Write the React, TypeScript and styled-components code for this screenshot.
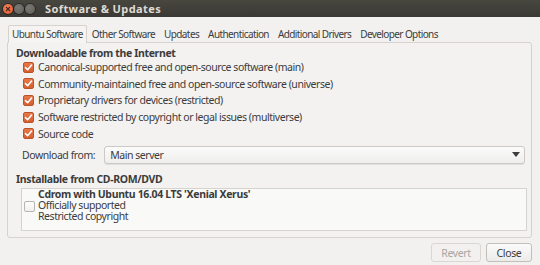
import styled, { createGlobalStyle } from "styled-components";

const GlobalStyle = createGlobalStyle`
   html, body {
      margin: 0;
      padding: 0;
      background: #f2f1f0;
   }
   body {
      font-family: "Noto Sans", "DejaVu Sans", sans-serif;
      font-size: 10.5px;
      letter-spacing: -0.45px;
      color: #3c3c3c;
      white-space: nowrap;
   }
`;

const sources = [
   { label: "Canonical-supported free and open-source software (main)", checked: true },
   { label: "Community-maintained free and open-source software (universe)", checked: true },
   { label: "Proprietary drivers for devices (restricted)", checked: true },
   { label: "Software restricted by copyright or legal issues (multiverse)", checked: true },
   { label: "Source code", checked: true },
];

const tabs = ["Ubuntu Software", "Other Software", "Updates", "Authentication", "Additional Drivers", "Developer Options"];

function CheckBox(props: { checked: boolean }) {
   return (
      <Box $checked={props.checked}>
         {props.checked && (
            <svg width="9" height="9" viewBox="0 0 9 9">
               <path d="M1.5 4.6 L3.6 6.7 L7.6 2" stroke="#fff" strokeWidth="1.6" fill="none" strokeLinecap="round" strokeLinejoin="round" />
            </svg>
         )}
      </Box>
   );
}

export default function App() {
   return (
      <Window>
         <GlobalStyle />
         <TitleBar>
            <WinButtons>
               <WinButton $kind="close">
                  <svg width="6" height="6" viewBox="0 0 6 6">
                     <path d="M1 1 L5 5 M5 1 L1 5" stroke="#4a2a1c" strokeWidth="1.2" />
                  </svg>
               </WinButton>
               <WinButton $kind="min" />
               <WinButton $kind="max" />
            </WinButtons>
            <Title>Software &amp; Updates</Title>
         </TitleBar>

         <Body>
            <TabBar>
               {tabs.map((t, i) => (
                  <Tab key={t} $active={i === 0}>{t}</Tab>
               ))}
            </TabBar>
            <Page>
               <SectionTitle>Downloadable from the Internet</SectionTitle>
               <CheckList>
                  {sources.map(s => (
                     <CheckRow key={s.label}>
                        <CheckBox checked={s.checked} />
                        <span>{s.label}</span>
                     </CheckRow>
                  ))}
               </CheckList>
               <DownloadRow>
                  <span>Download from:</span>
                  <Combo>
                     <span>Main server</span>
                     <svg width="8" height="5" viewBox="0 0 8 5">
                        <path d="M0 0 L8 0 L4 5 Z" fill="#3c3c3c" />
                     </svg>
                  </Combo>
               </DownloadRow>
               <SectionTitle>Installable from CD-ROM/DVD</SectionTitle>
               <ListBox>
                  <CdItem>
                     <CdCheck><CheckBox checked={false} /></CdCheck>
                     <CdText>
                        <strong>Cdrom with Ubuntu 16.04 LTS 'Xenial Xerus'</strong>
                        <span>Officially supported</span>
                        <span>Restricted copyright</span>
                     </CdText>
                  </CdItem>
               </ListBox>
            </Page>
            <ButtonRow>
               <Button disabled>Revert</Button>
               <Button>Close</Button>
            </ButtonRow>
         </Body>
      </Window>
   );
}

const Window = styled.div`
   width: 540px;
   height: 265px;
   display: flex;
   flex-direction: column;
   overflow: hidden;
`;

const TitleBar = styled.div`
   height: 17px;
   background: linear-gradient(#47463f, #3a3935);
   display: flex;
   align-items: center;
   padding-left: 3px;
   gap: 10px;
`;

const WinButtons = styled.div`
   display: flex;
   gap: 1px;
`;

const WinButton = styled.div<{ $kind: string }>`
   width: 10px;
   height: 10px;
   border-radius: 50%;
   display: flex;
   align-items: center;
   justify-content: center;
   background: ${p => (p.$kind === "close" ? "radial-gradient(circle at 40% 35%, #f7845c, #e0512a)" : "radial-gradient(circle at 40% 35%, #7a7872, #5d5b56)")};
   box-shadow: 0 0 0 1px rgba(0, 0, 0, 0.35);
`;

const Title = styled.div`
   color: #dfdbd2;
   font-size: 11px;
   font-weight: bold;
   letter-spacing: 0.4px;
`;

const Body = styled.div`
   flex: 1;
   display: flex;
   flex-direction: column;
   padding: 7px 8px 0 7px;
`;

const TabBar = styled.div`
   display: flex;
   align-items: flex-end;
   gap: 1px;
   padding-left: 1px;
   height: 18px;
`;

const Tab = styled.div<{ $active?: boolean }>`
   padding: 0 3px 0 3px;
   height: 17px;
   line-height: 16px;
   font-size: 10px;
   letter-spacing: -0.6px;
   color: #3c3c3c;
   border: 1px solid ${p => (p.$active ? "#d6d2ce" : "transparent")};
   border-bottom: none;
   border-radius: 2px 2px 0 0;
   background: ${p => (p.$active ? "#f5f4f3" : "transparent")};
   margin-bottom: -1px;
   position: relative;
   z-index: 1;
`;

const Page = styled.div`
   height: 196px;
   box-sizing: border-box;
   border: 1px solid #d6d2ce;
   border-radius: 0 3px 3px 3px;
   background: #f3f2f1;
   padding: 2px 6px 0 8px;
   display: flex;
   flex-direction: column;
`;

const SectionTitle = styled.div`
   font-weight: bold;
   height: 16px;
   line-height: 16px;
   letter-spacing: -0.35px;
`;

const CheckList = styled.div`
   display: flex;
   flex-direction: column;
   padding-left: 7px;
   margin-top: -2px;
`;

const CheckRow = styled.div`
   display: flex;
   align-items: center;
   gap: 4px;
   height: 16.6px;
`;

const Box = styled.div<{ $checked: boolean }>`
   width: 11px;
   height: 11px;
   box-sizing: border-box;
   border-radius: 2px;
   display: flex;
   align-items: center;
   justify-content: center;
   border: 1px solid ${p => (p.$checked ? "#b9532a" : "#b8b4b0")};
   background: ${p => (p.$checked ? "linear-gradient(#e8774a, #d55e2e)" : "linear-gradient(#fdfdfd, #f1f0ef)")};
   flex: none;
`;

const DownloadRow = styled.div`
   display: flex;
   align-items: center;
   gap: 9px;
   padding-left: 6px;
   margin-top: 3px;
   height: 20px;
   margin-bottom: 6px;
`;

const Combo = styled.div`
   flex: 1;
   height: 18px;
   box-sizing: border-box;
   border: 1px solid #ccc8c4;
   border-radius: 3px;
   background: linear-gradient(#fbfbfb, #efeeed);
   box-shadow: 0 1px 0 rgba(0, 0, 0, 0.08);
   display: flex;
   align-items: center;
   justify-content: space-between;
   padding: 0 4px 0 5px;
`;

const ListBox = styled.div`
   margin: 1px 0 0 5px;
   height: 43px;
   width: 506px;
   box-sizing: border-box;
   border: 1px solid #d6d2ce;
   background: #f9f9f8;
`;

const CdItem = styled.div`
   display: flex;
   padding: 0 0 0 2px;
`;

const CdCheck = styled.div`
   padding-top: 12px;
   width: 14px;
`;

const CdText = styled.div`
   display: flex;
   flex-direction: column;
   line-height: 11px;
   strong {
      font-weight: bold;
      letter-spacing: -0.35px;
   }
`;

const ButtonRow = styled.div`
   display: flex;
   justify-content: flex-end;
   gap: 5px;
   padding-top: 5px;
`;

const Button = styled.button`
   font-family: inherit;
   font-size: 10.5px;
   letter-spacing: -0.35px;
   height: 19px;
   padding: 0 8px;
   min-width: 46px;
   border-radius: 3px;
   border: 1px solid ${p => (p.disabled ? "#dad7d3" : "#c2beb9")};
   background: ${p => (p.disabled ? "#f2f1f0" : "linear-gradient(#fbfbfb, #ecebea)")};
   color: ${p => (p.disabled ? "#a9a6a2" : "#3c3c3c")};
   &:first-child {
      min-width: 50px;
   }
`;
